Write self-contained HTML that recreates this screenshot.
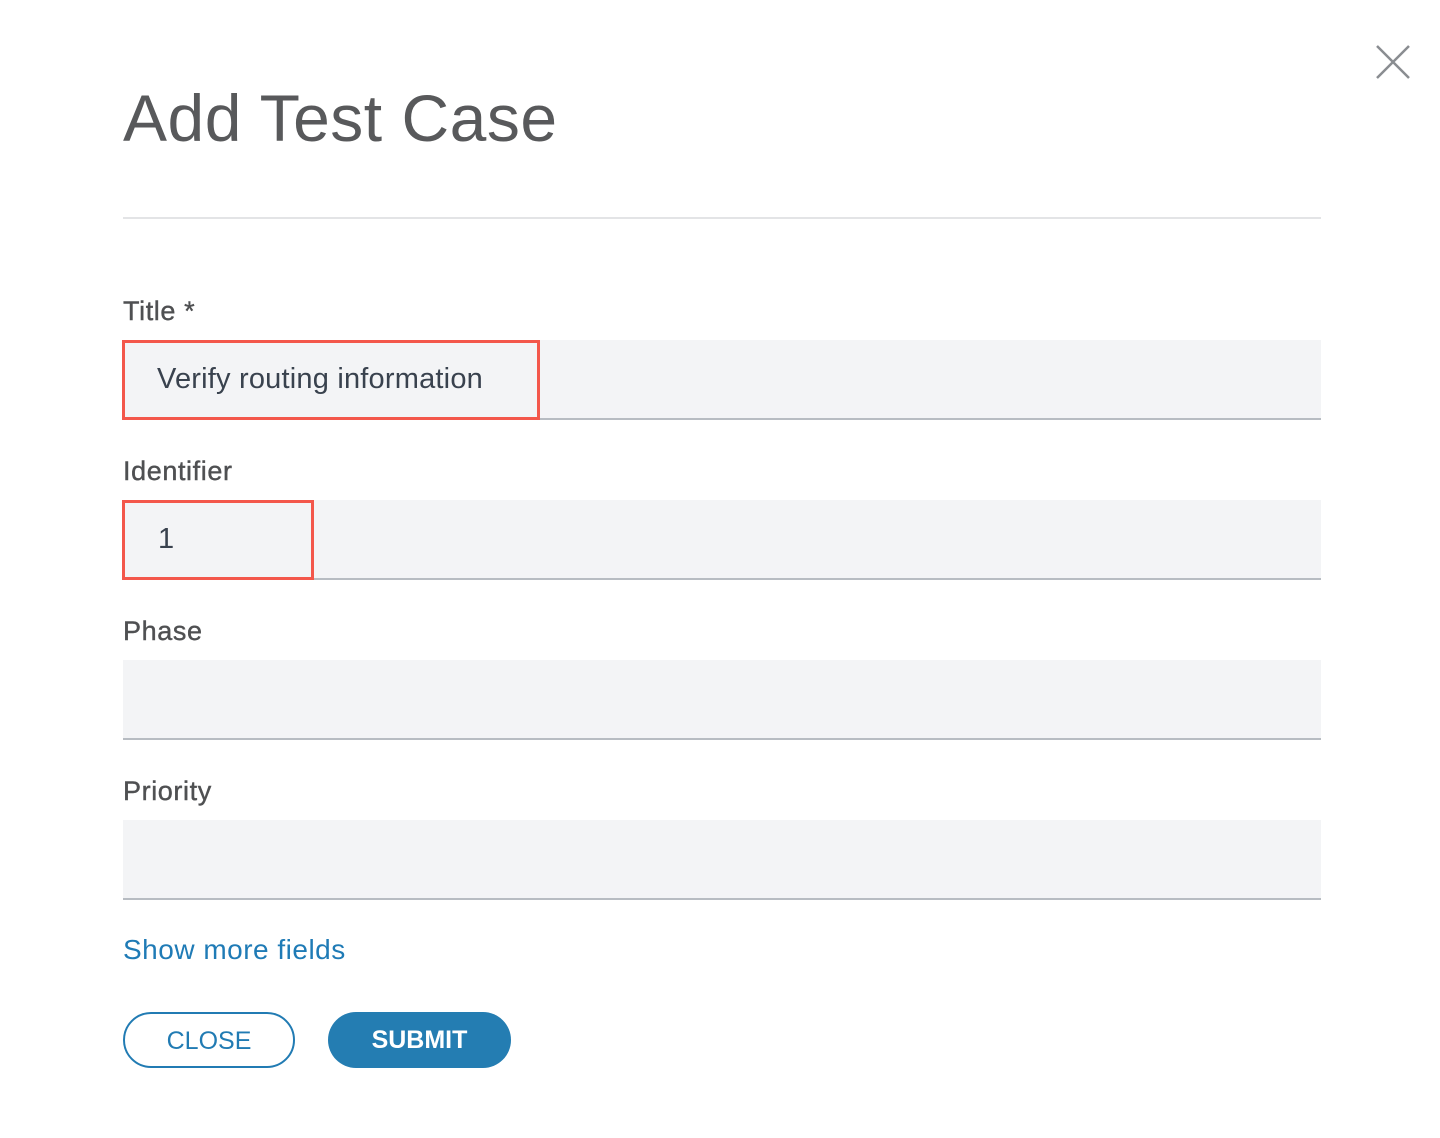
<!DOCTYPE html>
<html><head><style>
body{margin:0;width:1440px;height:1138px;background:#fff;font-family:"Liberation Sans",sans-serif;position:relative;overflow:hidden}
.a{position:absolute}
h1{position:absolute;left:123px;top:80px;margin:0;font-size:66px;font-weight:normal;color:#58595b;letter-spacing:0.5px}
.hr{left:123px;top:217px;width:1198px;height:2px;background:#e3e4e6}
.lbl{left:123px;font-size:27px;color:#4f5052;letter-spacing:0.6px;-webkit-text-stroke:0.4px #4f5052}
.in{left:123px;width:1198px;height:78px;background:#f3f4f6;border-bottom:2px solid #b7bcc2}
.red{border:3px solid #f3574b;box-sizing:border-box}
.txt{font-size:29px;color:#39424e;letter-spacing:0.2px}
</style></head><body>
<svg class="a" style="left:1376px;top:45px" width="34" height="34"><path d="M1 1L33 33M33 1L1 33" stroke="#8a8d91" stroke-width="2.5"/></svg>
<h1>Add Test Case</h1>
<div class="a hr"></div>
<div class="a lbl" style="top:296px">Title *</div>
<div class="a in" style="top:340px"></div>
<div class="a red" style="left:122px;top:340px;width:418px;height:80px"></div>
<div class="a txt" style="left:157px;top:363px">Verify routing information</div>
<div class="a lbl" style="top:456px">Identifier</div>
<div class="a in" style="top:500px"></div>
<div class="a red" style="left:122px;top:500px;width:192px;height:80px"></div>
<div class="a txt" style="left:158px;top:523px">1</div>
<div class="a lbl" style="top:616px">Phase</div>
<div class="a in" style="top:660px"></div>
<div class="a lbl" style="top:776px">Priority</div>
<div class="a in" style="top:820px"></div>
<div class="a" style="left:123px;top:934px;font-size:28px;letter-spacing:0.5px;color:#1f7bb6">Show more fields</div>
<div class="a" style="left:123px;top:1012px;width:168px;height:52px;border:2px solid #217bb3;border-radius:28px;color:#217bb3;font-size:25px;text-align:center;line-height:54px">CLOSE</div>
<div class="a" style="left:328px;top:1012px;width:183px;height:56px;background:#247db2;border-radius:28px;color:#fff;font-size:25px;font-weight:bold;text-align:center;line-height:57px">SUBMIT</div>
</body></html>
